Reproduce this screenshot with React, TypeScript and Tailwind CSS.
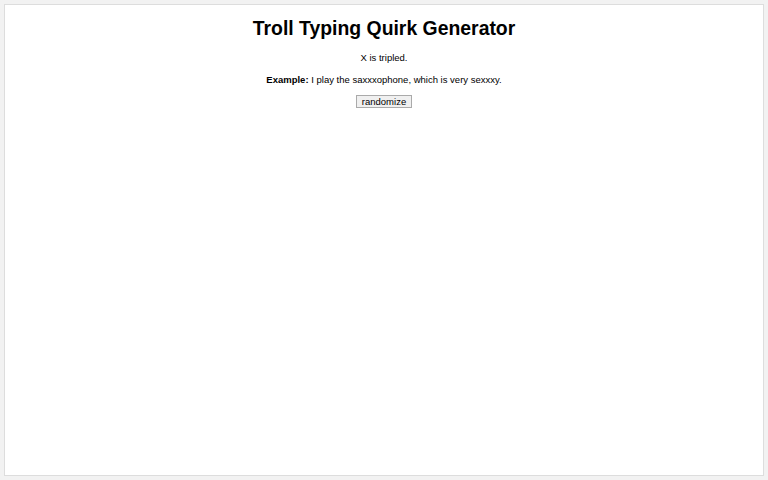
export default function App() {
  return (
    <div className="h-[480px] bg-[#f2f2f2] p-1 font-['Liberation_Sans',Arial,sans-serif] text-black">
      <div className="flex h-full flex-col items-center border border-[#dddddd] bg-white pt-[11px]">
        <h1 className="text-[19.4px] font-bold leading-[24px]">Troll Typing Quirk Generator</h1>
        <p className="mt-[12px] text-[9.5px] leading-[11px]">X is tripled.</p>
        <p className="mt-[11px] text-[9.5px] leading-[11px]">
          <b>Example:</b> I play the saxxxophone, which is very sexxxy.
        </p>
        <button className="mt-[10px] h-[13px] border border-[#aaaaaa] bg-[#f0f0f0] px-[4.5px] text-[9.5px] leading-[11px]">
          randomize
        </button>
      </div>
    </div>
  );
}
